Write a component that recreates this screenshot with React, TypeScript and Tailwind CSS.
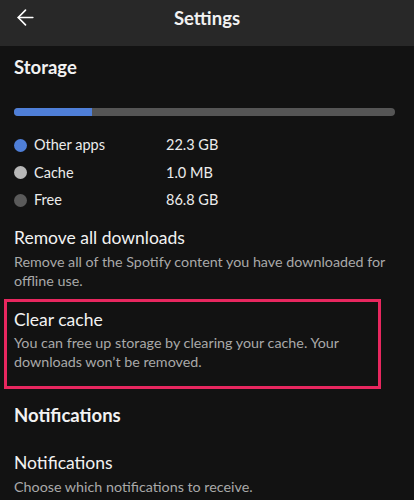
import { ArrowLeft } from 'lucide-react';

const legend = [
  { label: 'Other apps', value: '22.3 GB', dot: 'bg-[#4f7fd8]' },
  { label: 'Cache', value: '1.0 MB', dot: 'bg-[#b8b8b8]' },
  { label: 'Free', value: '86.8 GB', dot: 'bg-[#5a5a5a]' },
];

function Item({ title, desc }: { title: string; desc: string }) {
  return (
    <div>
      <div className="text-[17.5px] leading-[22px] text-[#f2f2f2]">{title}</div>
      <div className="mt-[2.5px] text-[14.3px] leading-[19px] text-[#a9a9a9]">{desc}</div>
    </div>
  );
}

export default function App() {
  return (
    <div
      className="h-[500px] w-[414px] overflow-hidden bg-[#121212] text-white"
      style={{ fontFamily: 'Lato, "Noto Sans", sans-serif' }}
    >
      <header className="relative flex h-[46px] items-center justify-center bg-[#282828]">
        <ArrowLeft className="absolute left-[13px] top-[5px] h-[25px] w-[25px] text-white" strokeWidth={1.6} />
        <h1 className="-mt-[8px] text-[18.5px] font-bold text-[#f2f2f2]">Settings</h1>
      </header>

      <main className="px-[14px]">
        <h2 className="mt-[10px] text-[18.5px] font-bold leading-[22px] text-[#f2f2f2]">Storage</h2>

        <div className="mt-[30px] flex h-[8px] w-[381px] overflow-hidden rounded-full bg-[#555555]">
          <div className="h-full w-[78px] bg-[#4f7fd8]" />
        </div>

        <ul className="mt-[19px] flex flex-col gap-[7.5px]">
          {legend.map((row) => (
            <li key={row.label} className="flex h-[20px] items-center text-[14.5px] text-[#ececec]">
              <span className={`h-[13px] w-[13px] rounded-full ${row.dot}`} />
              <span className="ml-[7px] w-[132px]">{row.label}</span>
              <span>{row.value}</span>
            </li>
          ))}
        </ul>

        <div className="mt-[17px]">
          <Item
            title="Remove all downloads"
            desc="Remove all of the Spotify content you have downloaded for offline use."
          />
        </div>
      </main>

      <div className="mx-[4px] mt-[9px] w-[377px] border-[3px] border-[#e8275f] px-[7px] pt-[7px] pb-[15px]">
        <Item
          title="Clear cache"
          desc="You can free up storage by clearing your cache. Your downloads won’t be removed."
        />
      </div>

      <div className="px-[14px]">
        <h2 className="mt-[15px] text-[18.5px] font-bold leading-[22px] text-[#f2f2f2]">Notifications</h2>
        <div className="mt-[26px]">
          <Item title="Notifications" desc="Choose which notifications to receive." />
        </div>
      </div>
    </div>
  );
}
